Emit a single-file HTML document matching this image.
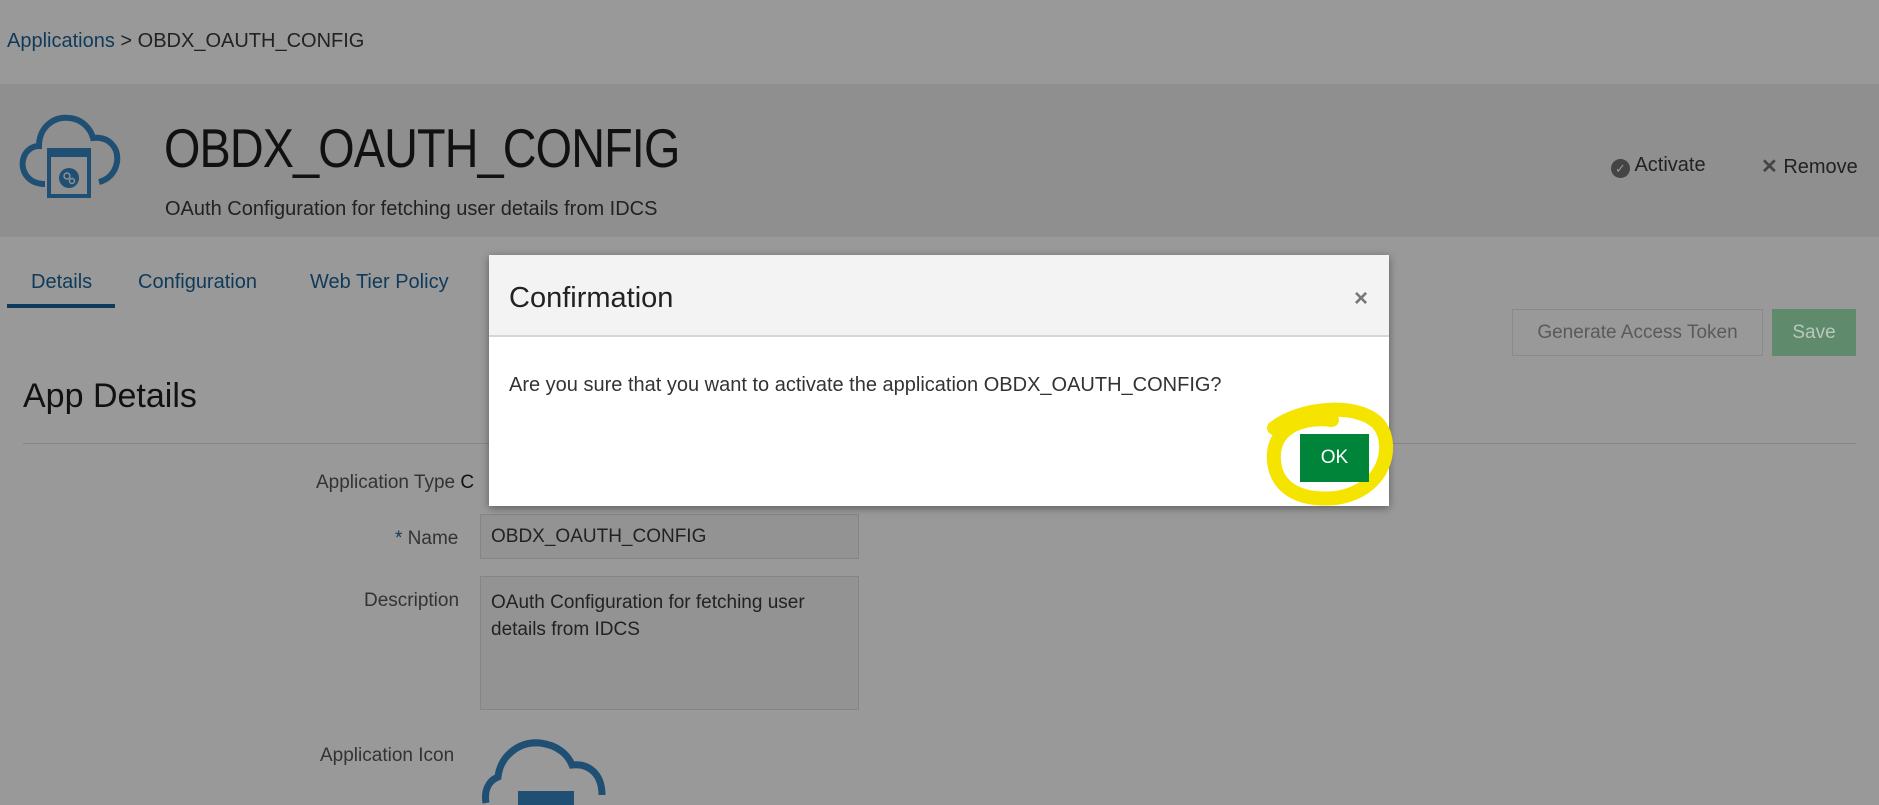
<!DOCTYPE html>
<html><head><meta charset="utf-8"><style>
*{box-sizing:border-box;margin:0;padding:0}
body{width:1879px;height:798px;overflow:hidden;background:#999;font-family:"Liberation Sans",sans-serif;position:relative;color:#1a1a1a}
.a{position:absolute;white-space:nowrap}
.lnk{color:#0f3a5a}
</style></head><body>
<div class="a" style="left:7px;top:30px;font-size:20px"><span class="lnk">Applications</span> <span style="color:#222">&gt; OBDX_OAUTH_CONFIG</span></div>
<div class="a" style="left:0;top:84px;width:1879px;height:153px;background:#8f8f8f"></div>
<svg class="a" style="left:17px;top:106px" width="106" height="95" viewBox="0 0 106 95">
<path d="M28 78 C10 78 4 64 6 54 C8 44 16 40 22 40 C22 22 36 10 52 12 C66 13 74 24 76 32 C92 30 102 42 100 56 C98 68 90 74 82 76" fill="none" stroke="#1f4f73" stroke-width="6"/>
<rect x="32" y="44" width="40" height="46" fill="#8f8f8f" stroke="#1f4f73" stroke-width="4"/>
<rect x="32" y="44" width="40" height="7" fill="#1f4f73"/>
<circle cx="52" cy="72" r="10" fill="#1f4f73"/>
<circle cx="50" cy="70" r="3" fill="none" stroke="#8f8f8f" stroke-width="1.5"/><circle cx="55" cy="75" r="2.5" fill="none" stroke="#8f8f8f" stroke-width="1.5"/>
</svg>
<div class="a" style="left:164px;top:116px;font-size:55px;color:#111;letter-spacing:-1px;transform:scaleX(0.85);transform-origin:0 0">OBDX_OAUTH_CONFIG</div>
<div class="a" style="left:165px;top:198px;font-size:20px;color:#222">OAuth Configuration for fetching user details from IDCS</div>
<div class="a" style="left:1611px;top:154px;font-size:20px;color:#222"><span style="display:inline-block;width:19px;height:19px;border-radius:50%;background:#444;color:#999;font-size:13px;text-align:center;line-height:19px;vertical-align:-2px">✓</span> Activate</div>
<div class="a" style="left:1761px;top:154px;font-size:20px;color:#222"><span style="color:#444;font-weight:bold">✕</span> Remove</div>
<div class="a lnk" style="left:31px;top:271px;font-size:20px">Details</div>
<div class="a lnk" style="left:138px;top:271px;font-size:20px">Configuration</div>
<div class="a lnk" style="left:310px;top:271px;font-size:20px">Web Tier Policy</div>
<div class="a" style="left:7px;top:304px;width:108px;height:4px;background:#0f3a5a"></div>
<div class="a" style="left:1512px;top:309px;width:251px;height:47px;border:1px solid #8a8a8a;color:#5a5a5a;font-size:19px;text-align:center;line-height:45px">Generate Access Token</div>
<div class="a" style="left:1772px;top:309px;width:84px;height:47px;background:#5f8a6c;color:#b8c8bc;font-size:19px;text-align:center;line-height:47px">Save</div>
<div class="a" style="left:23px;top:377px;font-size:34px;color:#111">App Details</div>
<div class="a" style="left:23px;top:443px;width:1833px;height:1px;background:#868686"></div>
<div class="a" style="left:316px;top:472px;font-size:19px;color:#333">Application Type <span style="color:#111">C</span></div>
<div class="a" style="left:395px;top:528px;font-size:19px;color:#333"><span style="color:#0f3a5a">*</span> Name</div>
<div class="a" style="left:480px;top:514px;width:379px;height:45px;border:1px solid #858585;background:#939393;font-size:19px;color:#222;padding:11px 10px">OBDX_OAUTH_CONFIG</div>
<div class="a" style="left:364px;top:590px;font-size:19px;color:#333">Description</div>
<div class="a" style="left:480px;top:576px;width:379px;height:134px;border:1px solid #858585;background:#939393;font-size:19px;color:#222;padding:12px 10px;white-space:normal;line-height:27px">OAuth Configuration for fetching user details from IDCS</div>
<div class="a" style="left:320px;top:745px;font-size:19px;color:#333">Application Icon</div>
<svg class="a" style="left:478px;top:735px" width="150" height="70"><path d="M8 68 C6 56 10 46 20 42 C22 22 40 6 62 8 C80 10 90 20 94 30 C112 28 124 40 124 60" fill="none" stroke="#1f4f73" stroke-width="7"/><rect x="40" y="56" width="56" height="20" fill="#1f4f73"/></svg>
<div class="a" style="left:489px;top:255px;width:900px;height:251px;background:#fff;box-shadow:0 2px 8px rgba(0,0,0,.4)">
<div style="height:82px;background:#f3f3f3;border-bottom:2px solid #d6d6d6;position:relative">
<div class="a" style="left:20px;top:27px;font-size:29px;color:#222">Confirmation</div>
<div class="a" style="left:865px;top:30px;font-size:24px;color:#777;font-weight:bold">×</div>
</div>
<div class="a" style="left:20px;top:119px;font-size:20px;color:#333">Are you sure that you want to activate the application OBDX_OAUTH_CONFIG?</div>
</div>
<svg class="a" style="left:1262px;top:398px" width="135" height="110"><path d="M12 30 C40 8 100 4 118 28 C132 48 124 92 74 100 C30 104 10 84 12 55 C14 30 40 18 70 22" fill="none" stroke="#f5e400" stroke-width="14" stroke-linecap="round"/></svg>
<div class="a" style="left:1300px;top:434px;width:69px;height:48px;background:#00843a;color:#fff;font-size:19px;text-align:center;line-height:48px">OK</div>
</body></html>
